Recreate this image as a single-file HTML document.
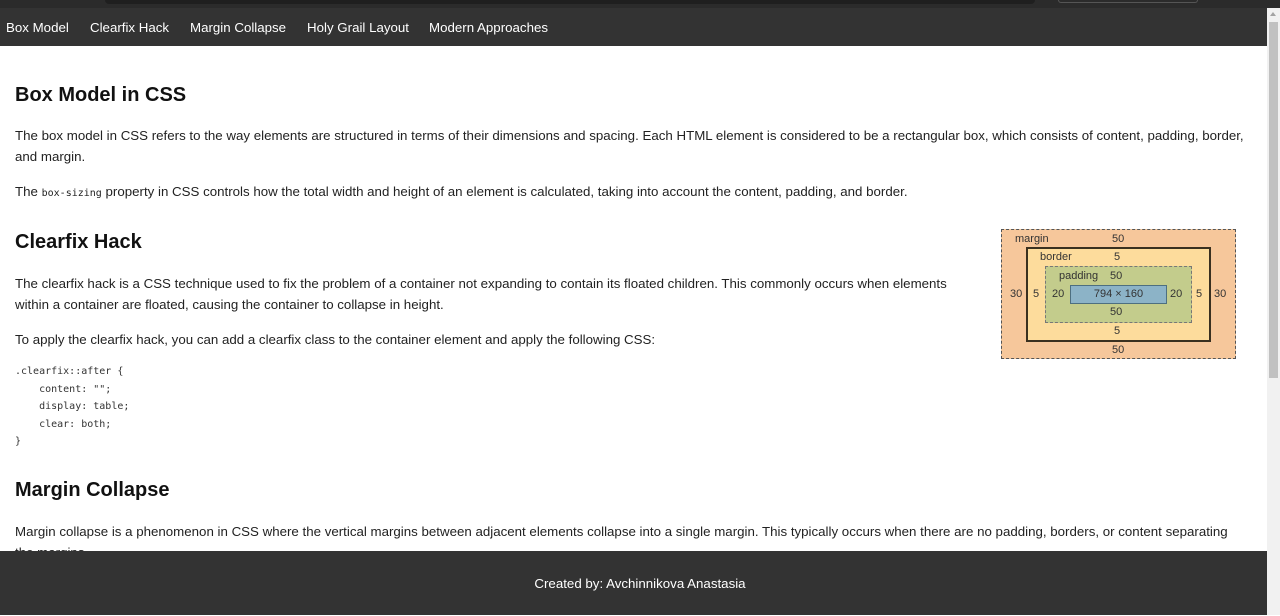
<!DOCTYPE html>
<html><head><style>
*{margin:0;padding:0;box-sizing:border-box}
body{width:1280px;height:615px;overflow:hidden;background:#fff;font-family:"Liberation Sans",Arial,sans-serif;color:#222;position:relative}
.top{position:absolute;left:0;top:0;width:1280px;height:8px;background:#2b2b2b}
.top .a{position:absolute;left:105px;top:0;width:930px;height:4px;background:#1f1f1f;border-radius:0 0 5px 5px}
.top .b{position:absolute;left:1058px;top:0;width:140px;height:3px;border:1px solid #555;border-top:none;border-radius:0 0 8px 8px}
nav{position:absolute;left:0;top:8px;width:1267px;height:38px;background:#333;color:#fff;font-size:13.3px}
nav span{position:absolute;top:12px}
.sb{position:absolute;left:1267px;top:8px;width:13px;height:607px;background:#f1f1f1}
.sb .t{position:absolute;left:2px;top:14px;width:9px;height:356px;background:#c1c1c1}
.sb .ar{position:absolute;left:3px;top:4px;width:0;height:0;border-left:3.5px solid transparent;border-right:3.5px solid transparent;border-bottom:4px solid #a3a3a3}
.t2{position:absolute;left:15px;font-size:20px;font-weight:bold;color:#111}
p{position:absolute;left:15px;font-size:13.3px;line-height:21px}
code{font-family:"DejaVu Sans Mono","Liberation Mono",monospace;font-size:10px}
pre{position:absolute;left:15px;top:363px;font-family:"DejaVu Sans Mono","Liberation Mono",monospace;font-size:10px;line-height:17.6px;color:#333}
footer{position:absolute;left:0;top:551px;width:1280px;height:64px;background:#333;color:#fff;font-size:13.3px;text-align:center;line-height:65px}
.bm{position:absolute;font-size:11px;color:#333}
.bm div{position:absolute}
</style></head><body>
<div class="top"><div class="a"></div><div class="b"></div></div>
<nav><span style="left:6px">Box Model</span><span style="left:90px">Clearfix Hack</span><span style="left:190px">Margin Collapse</span><span style="left:307px">Holy Grail Layout</span><span style="left:429px">Modern Approaches</span></nav>

<div class="t2" style="top:84px">Box Model in CSS</div>
<p style="top:125px;width:1250px">The box model in CSS refers to the way elements are structured in terms of their dimensions and spacing. Each HTML element is considered to be a rectangular box, which consists of content, padding, border, and margin.</p>
<p style="top:181px">The <code>box-sizing</code> property in CSS controls how the total width and height of an element is calculated, taking into account the content, padding, and border.</p>

<div class="t2" style="top:231px">Clearfix Hack</div>
<p style="top:273px;width:950px">The clearfix hack is a CSS technique used to fix the problem of a container not expanding to contain its floated children. This commonly occurs when elements within a container are floated, causing the container to collapse in height.</p>
<p style="top:329px">To apply the clearfix hack, you can add a clearfix class to the container element and apply the following CSS:</p>
<pre>.clearfix::after {
    content: "";
    display: table;
    clear: both;
}</pre>

<div class="bm" style="left:1001px;top:229px;width:235px;height:130px;background:#f6c79b;border:1px dashed #555">
 <div style="left:13px;top:3px">margin</div><div style="left:110px;top:3px">50</div>
 <div style="left:8px;top:58px">30</div><div style="left:212px;top:58px">30</div>
 <div style="left:110px;top:114px">50</div>
 <div style="left:24px;top:17px;width:185px;height:95px;background:#fddc9c;border:2px solid #3a3020">
  <div style="left:12px;top:2px">border</div><div style="left:86px;top:2px">5</div>
  <div style="left:5px;top:39px">5</div><div style="left:168px;top:39px">5</div>
  <div style="left:86px;top:76px">5</div>
  <div style="left:17px;top:17px;width:147px;height:57px;background:#c3cc8c;border:1px dashed #777">
   <div style="left:13px;top:3px">padding</div><div style="left:64px;top:3px">50</div>
   <div style="left:6px;top:21px">20</div><div style="left:124px;top:21px">20</div>
   <div style="left:64px;top:39px">50</div>
   <div style="left:24px;top:18px;width:97px;height:19px;background:#8cb3c7;border:1px solid #4d6f80;text-align:center;line-height:17px">794 × 160</div>
  </div>
 </div>
</div>

<div class="t2" style="top:479px">Margin Collapse</div>
<p style="top:521px;width:1225px">Margin collapse is a phenomenon in CSS where the vertical margins between adjacent elements collapse into a single margin. This typically occurs when there are no padding, borders, or content separating the margins.</p>

<footer>Created by: Avchinnikova Anastasia</footer>
<div class="sb"><div class="ar"></div><div class="t"></div></div>
</body></html>
